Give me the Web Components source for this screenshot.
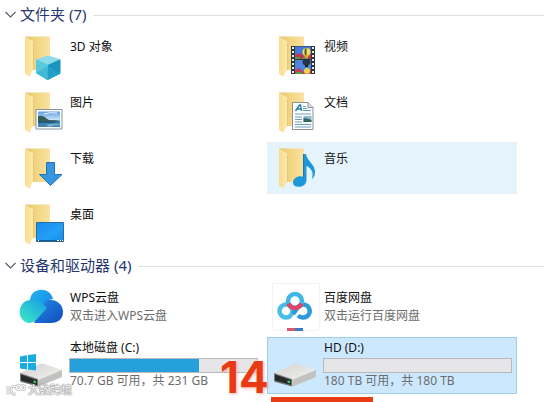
<!DOCTYPE html>
<html lang="zh-CN">
<head>
<meta charset="utf-8">
<meta name="viewport" content="width=device-width, initial-scale=1">
<title>此电脑</title>
<style>
  body {
    margin: 0;
    background: #fff;
    color: #111;
    font-family: "Noto Sans", "Noto Sans CJK SC", sans-serif;
    font-size: 12px;
  }
</style>
</head>
<body>
<explorer-view>
  <explorer-group label="文件夹" count="7">
    <explorer-item icon="objects">3D 对象</explorer-item>
    <explorer-item icon="video">视频</explorer-item>
    <explorer-item icon="pictures">图片</explorer-item>
    <explorer-item icon="documents">文档</explorer-item>
    <explorer-item icon="downloads">下载</explorer-item>
    <explorer-item icon="music" hovered>音乐</explorer-item>
    <explorer-item icon="desktop">桌面</explorer-item>
  </explorer-group>
  <explorer-group label="设备和驱动器" count="4">
    <explorer-app icon="wps">WPS云盘<span slot="detail">双击进入WPS云盘</span></explorer-app>
    <explorer-app icon="baidu">百度网盘<span slot="detail">双击运行百度网盘</span></explorer-app>
    <explorer-drive icon="system" label="本地磁盘 (C:)" used="69">70.7 GB 可用，共 231 GB</explorer-drive>
    <explorer-drive icon="disk" label="HD (D:)" used="0" selected>180 TB 可用，共 180 TB<step-mark slot="mark">14</step-mark></explorer-drive>
  </explorer-group>
  <water-mark slot="overlay">大数跨境</water-mark>
</explorer-view>

<script>
const folder = `
  <defs>
    <linearGradient id="back" x1="0" x2="1"><stop offset="0" stop-color="#e6c36a"/><stop offset=".45" stop-color="#f3d583"/><stop offset="1" stop-color="#fae3a0"/></linearGradient>
    <linearGradient id="flap" x1="0" x2="1"><stop offset="0" stop-color="#f8db8c"/><stop offset="1" stop-color="#fdeab0"/></linearGradient>
  </defs>
  <path d="M5.500 4.500H29q1 0 1 1V38H11z" fill="url(#back)"/>
  <path d="M5.500 4.500 12.500 9q1 .6 1 2v27q-2 1-2.500 3l-1 3.500-4-2q-1-.5-1-2V5.500z" fill="url(#flap)"/>
  <path d="M13.500 11v27" stroke="#dfbb62" stroke-width=".6" fill="none"/>`;

const disk = `
  <defs>
    <linearGradient id="top" x1="0" x2="1" y2="1"><stop offset="0" stop-color="#d2d2d0"/><stop offset="1" stop-color="#f2f2f1"/></linearGradient>
  </defs>
  <path d="M0 34 20 25q2-1 4 0l18 6-24 10z" fill="url(#top)"/>
  <path d="M18 41 42 31v6q0 1-1 1.500L20 47q-1 .5-2 0z" fill="#c2c2c0"/>
  <path d="M0 34 18 40v7.500L1 43q-1-.4-1-2z" fill="#777976"/>
  <path d="M1 35.500 17 41v5L1 41.500z" fill="#262a28"/>
  <path d="M13.500 41.500 16 42.300v2l-2.500-.8z" fill="#38e45a"/>`;

const icons = {
  objects: folder + `
    <path d="M28 24 40 28v14l-12.500 6L16 41V28z" fill="#30b4d2"/>
    <path d="M16 27.500 28 23.500l12.500 3.800L28 33z" fill="#8cdbea"/>
    <path d="M28 33 40.500 27.300v14L27.500 48z" fill="#1994bd"/>
    <path d="M16 27.500 28 33l-.5 15L16 41z" fill="#59c9df"/>
    <path d="M16 41l12-7 12.500 7.300L27.500 48z" fill="#29a9cf" opacity=".5"/>`,
  video: folder + `
    <path d="M17 14h24v28H17z" fill="#31343b"/>
    <path d="M21 14.500h16v12.500H21z" fill="#4779d6"/><path d="M21 28h16v14H21z" fill="#4d86df"/>
    <path d="M21 23l5-2 4 3 7-2v5H21z" fill="#bd3556"/><path d="M21 38l4-2 5 4 7-3v5H21z" fill="#c64055"/>
    <path d="M21 25h5v2h-5zM29 25h5v2h-5zM22 40h6v2h-6z" fill="#4fa240"/>
    <circle cx="32.500" cy="20" r="4" fill="#f6dc5c"/><path d="M32.500 16a2 4 0 0 0 0 8" fill="#4b5237"/>
    <path d="M29.500 23h6l-2 3h-2z" fill="#d8a62f"/>
    <path d="M28.500 29.500a4 4 0 0 0 8 0l-.5-1.500h-7z" fill="#283247"/><path d="M31 33h3v2h-3z" fill="#222"/>
    <circle cx="33" cy="39" r="3" fill="#f1cf50"/>
    <path d="M19 15v27M39 15v27" stroke="#e8edf3" stroke-width="2" stroke-dasharray="2 2"/>`,
  pictures: folder + `
    <defs><linearGradient id="sky" y2="1" x2="0"><stop offset="0" stop-color="#5d9de6"/><stop offset="1" stop-color="#e2f2fa"/></linearGradient></defs>
    <path d="M16 21.500h26v19.500H16z" fill="#fff" stroke="#8494a2"/>
    <path d="M18 23.500h22v10H18z" fill="url(#sky)"/>
    <path d="M18 32.500h22v6.500H18z" fill="#3f83ae"/>
    <path d="M18 28q5-1 8 2t7 2l7 1H18z" fill="#355f53"/>
    <path d="M18 33h22l-8 2H18z" fill="#205b79"/>
    <path d="M26 37q7-2 14-1v1q-6 0-11 2z" fill="#77b3cc"/>
    <path d="M24 26q5-2 13-1" stroke="#edf7ff" fill="none"/>`,
  documents: folder + `
    <path d="M18.500 14.500H34l5 5v22H18.500z" fill="#fcfdfe" stroke="#8b9096"/>
    <path d="M34 14.500v5h5" fill="#d8dce0" stroke="#8b9096"/>
    <path d="M21.500 23l4-6h1l1 6M23 21h4.500" fill="none" stroke="#267dae" stroke-width="1.400"/>
    <path d="M29 18.500h3M29 20.500h4M29 22.500h8M21 26h16M21 29h7M21 31.500h7M21 34h7M21 36.500h16M21 39h16" stroke="#6b9fb9"/>
    <path d="M29.500 28h8v6h-8z" fill="#8fb8cf"/><path d="M29.500 30q3 0 8 2v2h-8z" fill="#2e6860"/>`,
  downloads: folder + `
    <path d="M26.500 18.500h8v12H42L30.500 41.500 19.500 30.500h7z" fill="#3796e0" stroke="#2373b6"/>`,
  music: folder + `
    <path d="M29.500 10h2.500c1 7 9 10 9 18q0 5-3 7c2-7-1-11-5.500-13v14c0 8-13 9-13.500 3-.2-5 6-8 10.500-6z" fill="#1e98da"/>
    <path d="M29.500 10v24" stroke="#1679b4" fill="none"/>`,
  desktop: folder + `
    <defs><linearGradient id="screen" x2="1" y2="1"><stop offset="0" stop-color="#168ded"/><stop offset=".6" stop-color="#25a0f8"/><stop offset="1" stop-color="#1389e6"/></linearGradient></defs>
    <path d="M16.500 22.500h27v19h-27z" fill="url(#screen)" stroke="#286e9f"/>
    <path d="M17 40h26v1.500H17z" fill="#155b94"/>
    <path d="M18 40.500h1M37 40.500h2M40 40.500h1M42 40.500h1" stroke="#fff"/>`,
  wps: `
    <defs>
      <linearGradient id="right" x1="0" y1="0" x2="1" y2="1"><stop offset="0" stop-color="#238be9"/><stop offset="1" stop-color="#124dbb"/></linearGradient>
      <linearGradient id="head" x1="0" y1="0" x2="1" y2="1"><stop offset="0" stop-color="#20b5f1"/><stop offset="1" stop-color="#1880e6"/></linearGradient>
      <linearGradient id="left" x1="0" y1="1" x2="1" y2="0"><stop offset="0" stop-color="#40eac3"/><stop offset="1" stop-color="#159ce7"/></linearGradient>
    </defs>
    <path d="M20 23q5-8 12-6c7 1 11 6 11 12 0 7-5 11-12 11H14z" fill="url(#right)"/>
    <path d="M10 17C11 4 30 3 33 16q-7 0-11 7L10 29z" fill="url(#head)"/>
    <path d="M10 17q9-2 13 4l4 4-10 11q-4 4-8 4C-4 38-3 18 10 17" fill="url(#left)"/>`,
  baidu: `
    <rect x="-1.500" y=".5" width="47" height="47" rx="1" fill="#fff" stroke="#f3f2f3"/>
    <g fill="none" stroke-width="4.500">
      <circle cx="12" cy="28" r="6.500" stroke="#4abde6"/>
      <path d="M24 32.500Q26 34.500 29 34.500a6.500 6.500 0 1 0-4.500-11L19 31" stroke="#2a9cdc"/>
      <circle cx="21" cy="18" r="7" stroke="#3fb6e6"/>
      <path d="M14.500 20.500A7 7 0 0 0 27.500 20.500" stroke="#e04468"/>
    </g>
    <path d="M13 45h8v3h-8z" fill="#d9556d"/><path d="M21 45h8v3h-8z" fill="#397bc7"/>`,
  system: disk + `
    <path d="M0 17.500 7 16.300V23H0zM8 16.100 16 15v8H8zM0 24h7v6.500L0 29.500zM8 24h8v7.500L8 30.500z" fill="#17addf"/>`,
  disk,
};

class ShellIcon extends HTMLElement {
  constructor() {
    super();
    this.attachShadow({ mode: 'open' });
  }

  connectedCallback() {
    this.shadowRoot.innerHTML = `
      <style>
        :host { display: block; width: 48px; height: 48px; flex: none; }
        svg { display: block; overflow: visible; }
      </style>
      <svg width="48" height="48" viewBox="0 0 48 48" aria-hidden="true">${icons[this.getAttribute('name')]}</svg>
    `;
  }
}

const tileStyles = `
  :host { display: block; min-width: 0; }
  .tile {
    box-sizing: border-box;
    display: flex;
    gap: 1px;
    height: 100%;
    min-height: 52px;
    padding: 2px 5px 2px 7px;
    color: #111;
    text-decoration: none;
    white-space: nowrap;
  }
  .text { flex: 1; min-width: 0; }
  .name { display: block; line-height: 18px; padding-left: 1px; }
  .detail { display: block; line-height: 16px; padding-left: 1px; color: #6d6d6d; }
`;

class ExplorerItem extends HTMLElement {
  constructor() {
    super();
    this.attachShadow({ mode: 'open' });
  }

  connectedCallback() {
    this.shadowRoot.innerHTML = `
      <style>
        ${tileStyles}
        :host([hovered]) .tile, .tile:hover { background: #e5f3fc; }
        .text { padding-top: 6px; }
      </style>
      <a class="tile" href="#">
        <shell-icon name="${this.getAttribute('icon')}"></shell-icon>
        <span class="text"><span class="name"><slot></slot></span></span>
      </a>
    `;
  }
}

class ExplorerApp extends HTMLElement {
  constructor() {
    super();
    this.attachShadow({ mode: 'open' });
  }

  connectedCallback() {
    this.shadowRoot.innerHTML = `
      <style>
        ${tileStyles}
        .text { padding-top: 6px; }
        .detail { padding-top: 1px; }
      </style>
      <a class="tile" href="#">
        <shell-icon name="${this.getAttribute('icon')}"></shell-icon>
        <span class="text">
          <span class="name"><slot></slot></span>
          <span class="detail"><slot name="detail"></slot></span>
        </span>
      </a>
    `;
  }
}

class ExplorerDrive extends HTMLElement {
  constructor() {
    super();
    this.attachShadow({ mode: 'open' });
  }

  connectedCallback() {
    const label = this.getAttribute('label');
    this.shadowRoot.innerHTML = `
      <style>
        ${tileStyles}
        :host { position: relative; }
        .tile { min-height: 57px; }
        :host([selected]) .tile {
          background: #cce8ff;
          box-shadow: inset 0 0 0 1px #a3cde2;
        }
        progress {
          appearance: none;
          box-sizing: border-box;
          display: block;
          width: 100%;
          height: 15px;
          margin-top: 1px;
          border: 1px solid #b9b9bd;
          background: #e6e6e9;
        }
        progress::-webkit-progress-bar { background: #e6e6e9; }
        progress::-webkit-progress-value { background: #26a0da; }
      </style>
      <a class="tile" href="#">
        <shell-icon name="${this.getAttribute('icon')}"></shell-icon>
        <span class="text">
          <span class="name">${label}</span>
          <progress max="100" value="${this.getAttribute('used')}" aria-label="${label}"></progress>
          <span class="detail"><slot></slot></span>
        </span>
      </a>
      <slot name="mark"></slot>
    `;
  }
}

class ExplorerGroup extends HTMLElement {
  constructor() {
    super();
    this.attachShadow({ mode: 'open' });
  }

  connectedCallback() {
    this.shadowRoot.innerHTML = `
      <style>
        :host { display: block; }
        header { display: flex; align-items: center; gap: 7px; height: 30px; }
        header::after { content: ""; flex: 1; height: 1px; background: #e0e0e2; }
        h2 { margin: 0; font-size: 15px; font-weight: 400; }
        button {
          display: flex;
          align-items: center;
          gap: 4px;
          padding: 0 0 2px 5px;
          border: 0;
          background: none;
          color: #27366f;
          font: inherit;
          line-height: 20px;
        }
        .items {
          display: grid;
          grid-template-columns: repeat(2, minmax(0, 1fr));
          gap: 4px;
          padding: 0 27px 0 13px;
        }
      </style>
      <header>
        <h2><button type="button" aria-expanded="true">
          <svg width="11" height="7" viewBox="0 0 11 7" aria-hidden="true"><path d="M.5 1 5.500 6l5-5" fill="none" stroke="#555e6a" stroke-width="1.200"/></svg>
          <span>${this.getAttribute('label')} (${this.getAttribute('count')})</span>
        </button></h2>
      </header>
      <div class="items"><slot></slot></div>
    `;
  }
}

// Red step number with its underline, drawn over the drive it points at
class StepMark extends HTMLElement {
  constructor() {
    super();
    this.attachShadow({ mode: 'open' });
  }

  connectedCallback() {
    this.shadowRoot.innerHTML = `
      <style>
        :host { color: #e83b15; pointer-events: none; }
        .number {
          position: absolute;
          left: -47px;
          top: 18px;
          font-family: Inter, "Noto Sans", sans-serif;
          font-size: 44px;
          font-weight: 700;
          line-height: 44px;
          text-shadow: 0 0 2px #fff, 1px 1px 3px #e8603f88;
        }
        .line {
          position: absolute;
          left: 4px;
          top: calc(100% + 3px);
          width: 102px;
          height: 5px;
          background: #e83b15;
        }
      </style>
      <span class="number"><slot></slot></span>
      <span class="line"></span>
    `;
  }
}

class WaterMark extends HTMLElement {
  constructor() {
    super();
    this.attachShadow({ mode: 'open' });
  }

  connectedCallback() {
    this.shadowRoot.innerHTML = `
      <style>
        :host {
          position: absolute;
          left: 6px;
          bottom: 4px;
          display: flex;
          align-items: center;
          gap: 2px;
          color: #fff;
          font-size: 11px;
          line-height: 16px;
          text-shadow: 0 0 1px #777, 0 0 1px #777, 0 0 2px #999;
          pointer-events: none;
        }
      </style>
      <svg width="20" height="12" viewBox="0 0 20 12" fill="none" aria-hidden="true">
        <g stroke="#aaa" stroke-width="2.600"><path d="M2 2v9M10 3Q5 1 5 6t5 4"/><circle cx="12.500" cy="3.500" r="2"/><circle cx="17" cy="3.500" r="2"/></g>
        <g stroke="#fff" stroke-width="1.300"><path d="M2 2v9M10 3Q5 1 5 6t5 4"/><circle cx="12.500" cy="3.500" r="2"/><circle cx="17" cy="3.500" r="2"/></g>
      </svg>
      <slot></slot>
    `;
  }
}

class ExplorerView extends HTMLElement {
  constructor() {
    super();
    this.attachShadow({ mode: 'open' });
  }

  connectedCallback() {
    this.shadowRoot.innerHTML = `
      <style>
        :host { display: block; position: relative; min-height: 100vh; }
        main { display: flex; flex-direction: column; gap: 1px; }
      </style>
      <main><slot></slot></main>
      <slot name="overlay"></slot>
    `;
  }
}

customElements.define('shell-icon', ShellIcon);
customElements.define('explorer-item', ExplorerItem);
customElements.define('explorer-app', ExplorerApp);
customElements.define('explorer-drive', ExplorerDrive);
customElements.define('explorer-group', ExplorerGroup);
customElements.define('step-mark', StepMark);
customElements.define('water-mark', WaterMark);
customElements.define('explorer-view', ExplorerView);
</script>
</body>
</html>
